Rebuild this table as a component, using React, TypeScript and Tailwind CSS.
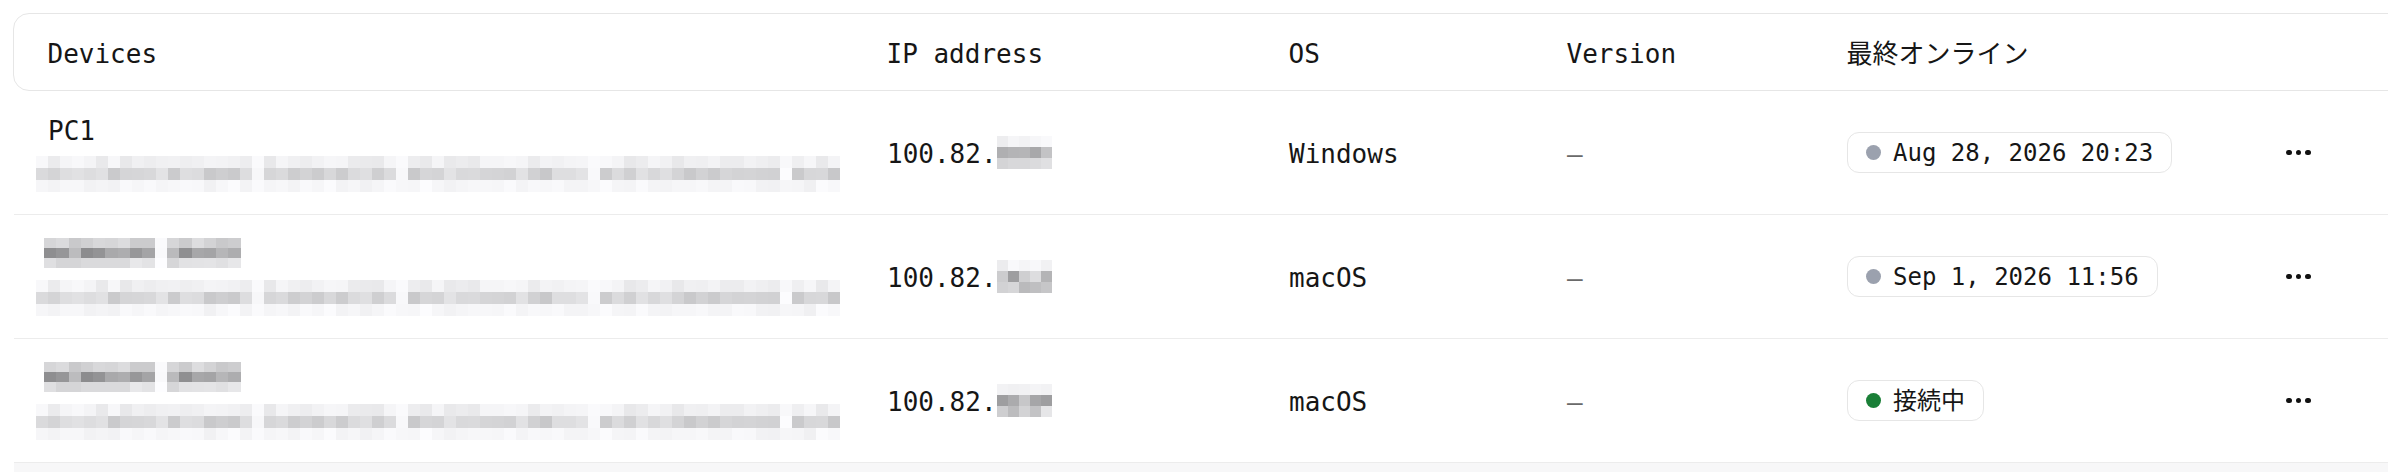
import { useMemo } from 'react'

type Device = {
  name?: string
  ipSeed: number
  nameSeed: number
  descSeed: number
  os: string
  lastSeen: string
  online: boolean
}

const devices: Device[] = [
  { name: 'PC1', ipSeed: 3, nameSeed: 0, descSeed: 11, os: 'Windows', lastSeen: 'Aug 28, 2026 20:23', online: false },
  { ipSeed: 7, nameSeed: 5, descSeed: 11, os: 'macOS', lastSeen: 'Sep 1, 2026 11:56', online: false },
  { ipSeed: 13, nameSeed: 5, descSeed: 11, os: 'macOS', lastSeen: '接続中', online: true },
]

const mono = { fontFamily: '"DejaVu Sans Mono", "Noto Sans CJK JP", monospace' }

// tiny seeded random so the pixelation stays stable between renders
function rng(seed: number) {
  let s = seed * 7919 + 17
  return () => {
    s = (s * 9301 + 49297) % 233280
    return s / 233280
  }
}

function Mosaic({
  cols, cellW, cellH, seed, ranges, gaps = [],
}: {
  cols: number
  cellW: number
  cellH: number
  seed: number
  ranges: [number, number][]
  gaps?: number[]
}) {
  const grid = useMemo(() => {
    const r = rng(seed)
    return ranges.map(([lo, hi]) =>
      Array.from({ length: cols }, (_, c) => {
        const v = gaps.includes(c) ? 246 + Math.floor(r() * 8) : Math.round(lo + r() * (hi - lo))
        return `rgb(${v},${v},${v + 2})`
      })
    )
  }, [cols, seed, ranges, gaps])

  return (
    <div className="flex flex-col">
      {grid.map((row, i) => (
        <div key={i} className="flex">
          {row.map((bg, j) => (
            <div key={j} style={{ width: cellW, height: cellH, background: bg }} />
          ))}
        </div>
      ))}
    </div>
  )
}

const descRanges: [number, number][] = [[232, 248], [200, 228], [240, 252]]
const nameRanges: [number, number][] = [[200, 225], [135, 190], [210, 236]]
const ipRanges: [number, number][] = [[236, 250], [140, 230], [185, 232]]

function Row({ d }: { d: Device }) {
  return (
    <div className="grid grid-cols-[839px_402px_278px_280px_440px_1fr] h-[124px] border-b-[1.5px] border-[#ececec] text-[26px] text-[#161616]">
      {/* device name + description */}
      <div className="pl-[34px] flex flex-col justify-center gap-[12px]">
        {d.name ? (
          <div className="h-[30px] leading-[30px] pt-[2px]">{d.name}</div>
        ) : (
          <div className="h-[30px] -ml-[4px]">
            <Mosaic cols={16} cellW={12.3} cellH={10} seed={d.nameSeed} ranges={nameRanges} gaps={[9]} />
          </div>
        )}
        <div className="-ml-[12px]">
          <Mosaic cols={67} cellW={12} cellH={12} seed={d.descSeed} ranges={descRanges} gaps={[18, 30, 46, 62]} />
        </div>
      </div>

      <div className="pl-[34px] pt-[3px] flex items-center">
        <span>100.82.</span>
        <span className="-mt-[4px]">
          <Mosaic cols={5} cellW={11} cellH={11} seed={d.ipSeed} ranges={ipRanges} />
        </span>
      </div>

      <div className="pl-[34px] pt-[3px] flex items-center">{d.os}</div>

      <div className="pl-[34px] pt-[3px] flex items-center text-[#6a6a6a]">–</div>

      <div className="pl-[34px] flex items-center">
        <div className="h-[41px] flex items-center gap-[12px] pl-[18px] pr-[18px] rounded-[12px] border-[1.5px] border-[#e6e6e6] bg-white text-[24px]">
          <span className={`w-[15px] h-[15px] rounded-full ${d.online ? 'bg-[#1a7f37]' : 'bg-[#9ba1ae]'}`} />
          <span>{d.lastSeen}</span>
        </div>
      </div>

      <div className="pl-[33px] flex items-center gap-[4px]">
        <span className="w-[5.5px] h-[5.5px] rounded-full bg-[#111]" />
        <span className="w-[5.5px] h-[5.5px] rounded-full bg-[#111]" />
        <span className="w-[5.5px] h-[5.5px] rounded-full bg-[#111]" />
      </div>
    </div>
  )
}

export default function App() {
  return (
    <div className="w-[2388px] h-[472px] overflow-hidden bg-white" style={mono}>
      <div className="pt-[13px] pl-[14px] w-[2420px]">
        {/* HEADER */}
        <div className="grid grid-cols-[839px_402px_278px_280px_440px_1fr] h-[78px] pt-[4px] items-center rounded-[16px] border-[1.5px] border-[#e6e6e6] text-[26px] text-[#161616] -ml-[1.5px]">
          <div className="pl-[34px]">Devices</div>
          <div className="pl-[34px]">IP address</div>
          <div className="pl-[34px]">OS</div>
          <div className="pl-[34px]">Version</div>
          <div className="pl-[34px]">最終オンライン</div>
          <div />
        </div>

        {devices.map((d, i) => (
          <Row key={i} d={d} />
        ))}

        <div className="h-[40px] bg-[#f7f7f8]" />
      </div>
    </div>
  )
}
